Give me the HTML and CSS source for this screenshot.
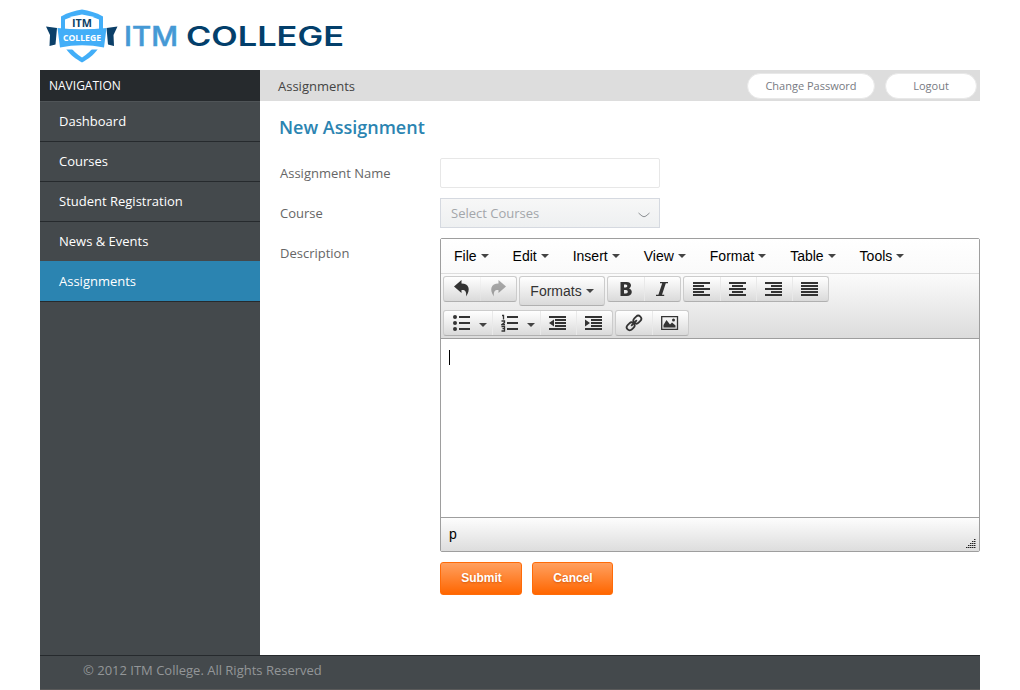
FILE: index.html
```html
<!DOCTYPE html>
<html lang="en">
<head>
<meta charset="utf-8">
<title>New Assignment - ITM College</title>
<link rel="stylesheet" href="styles.css">
</head>
<body>
<div class="page">
  <header class="header">
    <svg class="logo" width="310" height="70" viewBox="40 0 310 70" role="img">
      <path class="navy" d="M46 26.500l11 1.500-1.500 16.500-6 1.500 .5-11zM117.500 26.500l-11 1.500 1.500 16.500 6 1.500-.5-11z"/>
      <path class="sky" d="M82 9.500c7 1 14 3 21 7v14c0 17-9 25-21 32-12-7-21-15-21-32v-14c7-4 14-6 21-7z"/>
      <path class="white" d="M82 14.500q9 1 17 5v12q-1 16-17 26-16-10-17-26v-12q8-4 17-5z"/>
      <path class="white" d="M58 44q24-5 49 0l-3 5.500H61z"/>
      <path class="sky" d="M57.500 28q24.500 2.500 49 0l-2.500 19.500q-22-4.500-44 0z"/>
      <text class="crest navy" x="72" y="26.500" textLength="20" lengthAdjust="spacingAndGlyphs">ITM</text>
      <text class="crest crest-name white" x="63" y="40.500" textLength="38" lengthAdjust="spacingAndGlyphs">COLLEGE</text>
      <text class="word word-itm" x="124" y="46" textLength="54" lengthAdjust="spacingAndGlyphs">ITM</text>
      <text class="word word-college" x="186" y="46" textLength="158" lengthAdjust="spacingAndGlyphs">COLLEGE</text>
    </svg>
  </header>
  <div class="main">
    <nav class="sidebar">
      <h2 class="nav-title">NAVIGATION</h2>
      <a class="nav-item">Dashboard</a>
      <a class="nav-item">Courses</a>
      <a class="nav-item">Student Registration</a>
      <a class="nav-item">News &amp; Events</a>
      <a class="nav-item active">Assignments</a>
    </nav>
    <main class="content">
      <div class="topbar">
        <span class="crumb">Assignments</span>
        <a class="pill pill-wide">Change Password</a>
        <a class="pill">Logout</a>
      </div>
      <h1 class="title">New Assignment</h1>
      <form class="form">
        <label class="label">Assignment Name</label>
        <div class="input"></div>
        <label class="label">Course</label>
        <div class="select"><span>Select Courses</span><svg width="12" height="6" viewBox="0 0 12 6"><path d="M.5 1L4 4q2 1.500 4 0L11.500 1" fill="none" stroke="#8c9093"/></svg></div>
        <label class="label">Description</label>
        <div class="editor">
          <div class="menubar">
            <span class="menu">File<i class="caret"></i></span>
            <span class="menu">Edit<i class="caret"></i></span>
            <span class="menu">Insert<i class="caret"></i></span>
            <span class="menu">View<i class="caret"></i></span>
            <span class="menu">Format<i class="caret"></i></span>
            <span class="menu">Table<i class="caret"></i></span>
            <span class="menu">Tools<i class="caret"></i></span>
          </div>
          <div class="tools">
            <div class="row">
              <div class="group">
                <span class="btn"><svg class="icon" viewBox="0 0 18 18"><path d="M1 6.500L8.500 0v3.500c7.500 0 9.500 6 4.500 13 .8-5-1-6.800-4.500-6.500V13z"/></svg></span>
                <span class="btn disabled"><svg class="icon" viewBox="0 0 18 18"><path d="M17 6.500L9.500 0v3.500c-7.500 0-9.500 6-4.500 13-.8-5 1-6.800 4.500-6.500V13z"/></svg></span>
              </div>
              <div class="group formats">Formats<i class="caret"></i></div>
              <div class="group">
                <span class="btn"><svg class="icon" viewBox="0 0 18 18"><path fill-rule="evenodd" d="M3.500 2h6.300c5 0 5.300 5 2.300 6.400 4.200 1.300 3.500 7.600-2.100 7.600H3.500zM7 4.500v3h1.700c2.200 0 2.200-3 0-3zM7 10v3.500h2c2.400 0 2.400-3.500 0-3.500z"/></svg></span>
                <span class="btn"><svg class="icon" viewBox="0 0 18 18"><path d="M7 2h8v1.200h-2.200L9 14.800h2.200V16H3v-1.200h2.400L9.200 3.200H7z"/></svg></span>
              </div>
              <div class="group">
                <span class="btn"><svg class="icon" viewBox="0 0 18 18"><path d="M0 2h17v2H0zM0 5h11v2H0zM0 8h17v2H0zM0 11h11v2H0zM0 14h17v2H0z"/></svg></span>
                <span class="btn"><svg class="icon" viewBox="0 0 18 18"><path d="M0 2h17v2H0zM3 5h11v2H3zM0 8h17v2H0zM3 11h11v2H3zM0 14h17v2H0z"/></svg></span>
                <span class="btn"><svg class="icon" viewBox="0 0 18 18"><path d="M0 2h17v2H0zM6 5h11v2H6zM0 8h17v2H0zM6 11h11v2H6zM0 14h17v2H0z"/></svg></span>
                <span class="btn"><svg class="icon" viewBox="0 0 18 18"><path d="M0 2h17v2H0zM0 5h17v2H0zM0 8h17v2H0zM0 11h17v2H0zM0 14h17v2H0z"/></svg></span>
              </div>
            </div>
            <div class="row">
              <div class="group">
                <span class="btn split"><svg class="icon" viewBox="0 0 18 18"><path d="M6 2h11v2H6zM6 8h11v2H6zM6 14h11v2H6z"/><circle cx="2" cy="3" r="2"/><circle cx="2" cy="9" r="2"/><circle cx="2" cy="15" r="2"/></svg><i class="caret"></i></span>
                <span class="btn split"><svg class="icon" viewBox="0 0 18 18"><path d="M6 2h11v2H6zM6 8h11v2H6zM6 14h11v2H6z"/><path fill="none" stroke="#333" stroke-width="1.300" d="M1 1.500h1.500V5.500M.5 7h3v1.500L1 10.500h3M.5 12.500h3v4.500h-3M1.500 14.700h2"/></svg><i class="caret"></i></span>
                <span class="btn"><svg class="icon" viewBox="0 0 18 18"><path d="M0 2h17v2H0zM6 5h11v2H6zM6 8h11v2H6zM6 11h11v2H6zM0 14h17v2H0zM5 5.500v7L0 9z"/></svg></span>
                <span class="btn"><svg class="icon" viewBox="0 0 18 18"><path d="M0 2h17v2H0zM6 5h11v2H6zM6 8h11v2H6zM6 11h11v2H6zM0 14h17v2H0zM0 5.500v7L5 9z"/></svg></span>
              </div>
              <div class="group">
                <span class="btn"><svg class="icon" viewBox="0 0 18 18"><g fill="none" stroke="#333" stroke-width="1.800" transform="rotate(-45 9 9)"><rect x="0" y="6" width="8.500" height="6" rx="3"/><rect x="9.500" y="6" width="8.500" height="6" rx="3"/><path d="M5 9h8"/></g></svg></span>
                <span class="btn"><svg class="icon" viewBox="0 0 18 18"><path fill="none" stroke="#333" stroke-width="1.300" d="M.7 2.700h15.800v12.600H.7z"/><path d="M2.500 13.500V11l3-5 3.500 4.500 2-2 3.500 3v2z"/><circle cx="12.500" cy="6" r="1.500"/></svg></span>
              </div>
            </div>
          </div>
          <div class="edit-area"><span class="cursor"></span></div>
          <div class="status"><span>p</span>
            <svg class="grip" width="10" height="10" viewBox="0 0 10 10"><g fill="none" stroke="#8a8a8a"><path d="M8 .5h2M6 2.500h4M4 4.500h6M2 6.500h8M0 8.500h10"/><path stroke="#222" stroke-dasharray="1 1" d="M8 .5h2M6 2.500h4M4 4.500h6M2 6.500h8M0 8.500h10"/></g></svg>
          </div>
        </div>
        <div class="actions"><span class="submit">Submit</span><span class="submit cancel">Cancel</span></div>
      </form>
    </main>
  </div>
  <footer class="footer">© 2012 ITM College. All Rights Reserved</footer>
</div>
</body>
</html>
```
FILE: styles.css
```css
* { box-sizing: border-box; }
body { margin: 0; background: #fff; font: 13px/20px "Open Sans", sans-serif; color: #666; }
.page { width: 940px; height: 690px; margin: 0 auto; display: flex; flex-direction: column; overflow: hidden; }
.header { height: 70px; }
.logo { display: block; }
.navy { fill: #0b3f68; }
.sky { fill: #42aef8; }
.white { fill: #fff; }
.crest { font: bold 10px "Open Sans", sans-serif; }
.crest-name { font-size: 9.500px; }
.word { font: 500 26.500px Inter, sans-serif; }
.word-itm { fill: #4599d5; stroke: #4599d5; stroke-width: .5px; }
.word-college { fill: #033f6b; font-weight: 600; }
.main { height: 585px; display: flex; }
.sidebar { width: 220px; background: #44494c; }
.nav-title { margin: 0; height: 31px; padding-left: 9px; background: #262a2d; color: #fff; font-size: 12px; font-weight: 400; line-height: 31px; }
.nav-item { display: block; height: 40px; padding-left: 19px; border-top: 1px solid #262a2d; color: #fff; line-height: 39px; }
.nav-title + .nav-item { border-top-color: #4f5457; }
.nav-item.active { height: 41px; background: #2b84b1; border-top-color: #2b84b1; border-bottom: 1px solid #262a2d; }
.content { flex: 1; }
.topbar { height: 31px; padding: 0 3px 0 18px; display: flex; align-items: center; gap: 10px; background: #ddd; }
.crumb { flex: 1; color: #444; }
.pill { width: 92px; height: 26px; border: 1px solid #e8e8e8; border-radius: 13px; background: #fff; color: #777a82; font-size: 11px; line-height: 24px; text-align: center; }
.pill-wide { width: 128px; }
.title { margin: 13px 0 0 19px; font-size: 18px; font-weight: 600; line-height: 26px; color: #2b84b1; }
.form { margin-top: 18px; padding-left: 20px; display: grid; grid-template-columns: 160px 540px; row-gap: 10px; }
.label { line-height: 30px; }
.input { width: 220px; height: 30px; border: 1px solid #e7e7e7; border-radius: 2px; }
.select { width: 220px; height: 30px; padding: 0 9px 0 10px; display: flex; align-items: center; justify-content: space-between; border: 1px solid #d5d9e0; background: linear-gradient(#f7f7f7, #eef0f1); color: #a3a6aa; }
.select svg { margin-top: 3px; }
.editor { height: 314px; border: 1px solid #9e9e9e; border-radius: 2px; font: 14px/20px "Liberation Sans", Arial, sans-serif; color: #000; }
.menubar { height: 35px; padding: 0 1px; display: flex; border-bottom: 1px solid #ddd; background: linear-gradient(#fff, #fafafa); }
.menu { padding: 0 12px; display: flex; align-items: center; }
.caret { width: 0; height: 0; margin-left: 4px; border: 4px solid transparent; border-top-color: #444; border-bottom: 0; }
.tools { height: 64px; padding: 2px 2px 0; display: flex; flex-direction: column; gap: 4px; background: linear-gradient(#fbfbfb, #dcdcdc); }
.row { display: flex; align-items: flex-start; gap: 2px; }
.group { height: 26px; display: flex; border: 1px solid #ccc; border-bottom-color: #b0b0b0; border-radius: 3px; background: linear-gradient(#fff, #dadada); }
.btn { width: 36px; display: flex; align-items: center; justify-content: center; }
.btn + .btn { box-shadow: inset 1px 0 #e9e9e9; }
.split { width: 48px; }
.split .caret { margin-left: 8px; margin-top: 3px; }
.split .icon { margin-left: 3px; }
.icon { width: 18px; height: 18px; margin-top: -1px; fill: #333; }
.disabled { opacity: .4; }
.formats { width: 86px; height: 30px; align-items: center; justify-content: center; color: #333; }
.edit-area { height: 180px; padding: 11px 8px; border: solid #9e9e9e; border-width: 1px 0; }
.cursor { display: block; width: 1px; height: 15px; background: #000; }
.status { height: 33px; padding: 0 3px 2px 8px; display: flex; justify-content: space-between; background: linear-gradient(#fdfdfd, #ddd); line-height: 33px; }
.grip { align-self: flex-end; }
.actions { grid-column: 2; display: flex; gap: 10px; }
.submit { width: 82px; height: 33px; padding-left: 1px; border: 1px solid #ff6b08; border-radius: 3px; background: linear-gradient(#ffa060, #ff6600); color: #fff; font: bold 12px/31px "Liberation Sans", Arial, sans-serif; text-align: center; text-shadow: 0 1px 2px #d65a0b; }
.cancel { width: 81px; }
.footer { height: 35px; padding-left: 43px; background: #44494c; border-top: 1px solid #262a2d; border-bottom: 1px solid #5a5a5a; color: #939698; line-height: 29px; }
```
